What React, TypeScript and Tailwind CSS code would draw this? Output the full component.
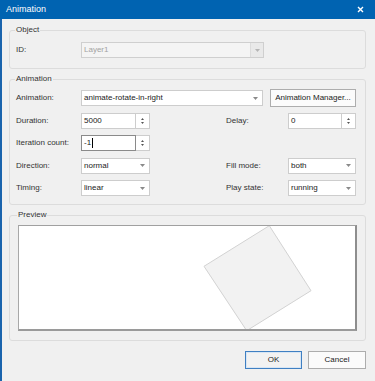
import React from 'react';

const font = { fontFamily: '"Liberation Sans", Arial, sans-serif' };

function Arrow({ color = '#8a8a8a' }: { color?: string }) {
  return (
    <svg width="5" height="3" viewBox="0 0 5 3">
      <polygon points="0,0 5,0 2.5,3" fill={color} />
    </svg>
  );
}

function Combo({ value, width, disabled }: { value: string; width: string; disabled?: boolean }) {
  return (
    <div
      className={`flex h-[16px] items-center border ${width} ${
        disabled ? 'border-[#cfcfcf] bg-[#f4f4f4] text-[#a3a3a3]' : 'border-[#cdcdcd] bg-white text-[#222]'
      }`}
    >
      <span className="flex-1 truncate pl-[2px]">{value}</span>
      <span
        className={`flex h-full w-[13px] items-center justify-center ${
          disabled ? 'border-l border-[#dcdcdc] bg-[#e9e9e9]' : ''
        }`}
      >
        <Arrow color={disabled ? '#b5b5b5' : '#8a8a8a'} />
      </span>
    </div>
  );
}

function Spin({ value, focused, width = 'w-[55px]' }: { value: string; focused?: boolean; width?: string }) {
  return (
    <div className="flex h-[16px]">
      <div
        className={`flex h-full items-center border bg-white pl-[2px] text-[#222] ${width} ${
          focused ? 'border-[#8a8a8a]' : 'border-[#cdcdcd]'
        }`}
      >
        {value}
        {focused && <span className="ml-[1px] h-[10px] w-px bg-black" />}
      </div>
      <div className="flex h-full w-[14px] flex-col items-center justify-center gap-[2px] border-y border-r border-[#cdcdcd] bg-white">
        <svg width="3" height="2" viewBox="0 0 3 2">
          <polygon points="0,2 3,2 1.5,0" fill="#555" />
        </svg>
        <svg width="3" height="2" viewBox="0 0 3 2">
          <polygon points="0,0 3,0 1.5,2" fill="#555" />
        </svg>
      </div>
    </div>
  );
}

function Group({ title, className, children }: { title: string; className?: string; children: React.ReactNode }) {
  return (
    <fieldset className={`rounded-[3px] border border-[#dcdcdc] px-[6px] ${className ?? ''}`}>
      <legend className="-ml-[1px] px-[1px] text-[8px] leading-[10px] text-[#333]">{title}</legend>
      {children}
    </fieldset>
  );
}

export default function App() {
  return (
    <div className="flex h-[381px] w-[375px] flex-col bg-[#f0f0f0] text-[8px] text-[#333]" style={font}>
      {/* title bar */}
      <div className="flex h-[19px] shrink-0 items-center justify-between bg-[#0063b1] pl-[6px] pr-[11px] text-white">
        <span className="text-[9px] leading-none">Animation</span>
        <svg width="7" height="7" viewBox="0 0 7 7">
          <path d="M1 1L6 6M6 1L1 6" stroke="white" strokeWidth="1.4" />
        </svg>
      </div>

      <div className="flex flex-1 flex-col border-l-2 border-[#1a64ad] pl-[7px] pr-[9px]">
        <Group title="Object" className="mt-[6px] pb-[10px] pt-[7px]">
          <div className="flex h-[16px] items-center">
            <span className="w-[65px]">ID:</span>
            <Combo value="Layer1" width="w-[183px]" disabled />
          </div>
        </Group>

        <Group title="Animation" className="mt-[5px] pb-[8px] pr-[9px] pt-[6px]">
          <div className="flex flex-col gap-[6.5px]">
            <div className="flex h-[16px] items-center">
              <span className="w-[65px]">Animation:</span>
              <Combo value="animate-rotate-in-right" width="w-[182px]" />
              <button className="ml-[7px] h-[18px] w-[86px] border border-[#adadad] bg-[#fbfbfb] text-[8px] text-[#222]">
                Animation Manager...
              </button>
            </div>
            <div className="grid h-[16px] grid-cols-[65px_69px_1fr_62px_68px] items-center">
              <span>Duration:</span>
              <Spin value="5000" />
              <span />
              <span>Delay:</span>
              <Spin value="0" width="w-[54px]" />
            </div>
            <div className="grid h-[16px] grid-cols-[65px_69px_1fr] items-center">
              <span>Iteration count:</span>
              <Spin value="-1" focused />
              <span />
            </div>
            <div className="grid h-[16px] grid-cols-[65px_69px_1fr_62px_68px] items-center">
              <span>Direction:</span>
              <Combo value="normal" width="w-[69px]" />
              <span />
              <span>Fill mode:</span>
              <Combo value="both" width="w-[68px]" />
            </div>
            <div className="grid h-[16px] grid-cols-[65px_69px_1fr_62px_68px] items-center">
              <span>Timing:</span>
              <Combo value="linear" width="w-[69px]" />
              <span />
              <span>Play state:</span>
              <Combo value="running" width="w-[68px]" />
            </div>
          </div>
        </Group>

        <Group title="Preview" className="mt-[5px] pb-[9px] pl-[8px] pr-[8px] pt-[5px]">
          <div className="h-[106px] overflow-hidden border-b-2 border-l border-r-2 border-t border-b-[#9a9a9a] border-l-[#a8a8a8] border-r-[#8e8e8e] border-t-[#a0a0a0] bg-white">
            <svg width="336" height="103" viewBox="0 0 336 103" className="block">
              <polygon
                points="250.3,-0.3 292,64.7 227.7,104.7 185,40.3"
                fill="#f2f2f2"
                stroke="#d2d2d2"
                strokeWidth="1"
              />
            </svg>
          </div>
        </Group>

        <div className="mt-[10px] flex justify-end gap-[6px]">
          <button className="h-[18px] w-[57px] border border-[#3f7fc2] bg-[#f2f2f2] text-[8px] text-[#222] shadow-[inset_0_0_0_1px_#d8e6f4]">
            OK
          </button>
          <button className="h-[18px] w-[58px] border border-[#adadad] bg-[#fbfbfb] text-[8px] text-[#222]">
            Cancel
          </button>
        </div>
      </div>
    </div>
  );
}
